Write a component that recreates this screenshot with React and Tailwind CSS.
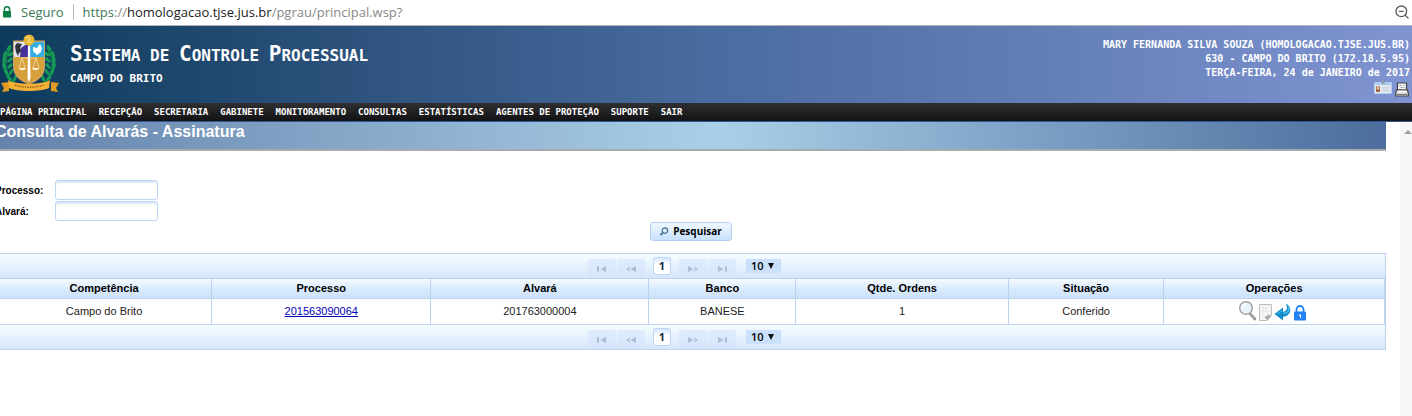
import { ZoomOut } from "lucide-react";

const menu = [
  "PÁGINA PRINCIPAL",
  "RECEPÇÃO",
  "SECRETARIA",
  "GABINETE",
  "MONITORAMENTO",
  "CONSULTAS",
  "ESTATÍSTICAS",
  "AGENTES DE PROTEÇÃO",
  "SUPORTE",
  "SAIR",
];

const columns = [
  { title: "Competência", width: "w-[15.5%]" },
  { title: "Processo", width: "w-[15.8%]" },
  { title: "Alvará", width: "w-[15.7%]" },
  { title: "Banco", width: "w-[10.6%]" },
  { title: "Qtde. Ordens", width: "w-[15.3%]" },
  { title: "Situação", width: "w-[11.2%]" },
  { title: "Operações", width: "w-[15.9%]" },
];

const rows = [
  {
    competencia: "Campo do Brito",
    processo: "201563090064",
    alvara: "201763000004",
    banco: "BANESE",
    ordens: 1,
    situacao: "Conferido",
  },
];

function AddressBar() {
  return (
    <div className="flex h-[26px] items-center border-b border-[#b5b5b5] bg-white px-[2px] pb-px font-['Open_Sans',sans-serif] text-[13px] leading-5">
      <svg viewBox="0 0 10 12" className="h-3 w-[10px] shrink-0">
        <path d="M2.4 6V3.4a2.6 2.6 0 0 1 5.2 0V6" fill="none" stroke="#0b8043" strokeWidth="1.5" />
        <rect x="1" y="5" width="8" height="6.6" rx="0.6" fill="#0b8043" />
      </svg>
      <span className="ml-[9px] text-[#3c7a55]">Seguro</span>
      <span className="mx-[9px] h-4 w-px bg-[#bbb]" />
      <span className="text-[#888]">
        <span className="text-[#3c7a55]">https</span>://
        <span className="text-[#222]">homologacao.tjse.jus.br</span>/pgrau/principal.wsp?
      </span>
      <button type="button" aria-label="Reduzir zoom" className="ml-auto text-[#5a5a5a]">
        <ZoomOut size={16} strokeWidth={2} />
      </button>
    </div>
  );
}

function Crest() {
  return (
    <svg viewBox="0 0 60 60" className="h-[60px] w-[60px] shrink-0">
      <g fill="none" stroke="#16884f" strokeWidth="2">
        <path d="M11 14C3 24 3 38 14 49" />
        <path d="M47 14c8 10 8 24-3 35" />
      </g>
      <g fill="#159a57">
        {[
          [9, 14, 30], [5, 20, 20], [4, 26, 5], [4, 32, -10], [6, 38, -25], [9, 44, -40],
          [11, 20, 60], [10, 26, 50], [10, 32, 40], [11, 38, 30], [15, 44, 20],
        ].map(([x, y, r]) => (
          <g key={`${x}-${y}`}>
            <ellipse cx={x} cy={y} rx="1.6" ry="3.4" transform={`rotate(${r} ${x} ${y})`} />
            <ellipse cx={58 - x} cy={y} rx="1.6" ry="3.4" transform={`rotate(${-r} ${58 - x} ${y})`} />
          </g>
        ))}
      </g>
      <path d="M13.500 7h31v25c0 9-5 14-15.500 18-10.500-4-15.500-9-15.500-18z" fill="#d6a03c" stroke="#c9a57a" strokeWidth="1" />
      <path d="M14 8h14v15H14z" fill="#dfe3ea" />
      <path d="M21 14l7-5v14h-8z" fill="#46309a" />
      <path d="M15 12l2-3 5 1-2 4 2 3-3 2-1 3-2-4z" fill="#30333d" />
      <path d="M30 8h14v15H30z" fill="#35aee0" />
      <path d="M33 13l4 1 3-4 2 4-1 4-4 3-4-4z" fill="#fff" />
      <path d="M28 12h2l.5 32-1.500 4-1.500-4z" fill="#fff" />
      <path d="M21 24h16M22 24l-3 10M22 24l3 10M36 24l-3 10M36 24l3 10" fill="none" stroke="#fff3d6" strokeWidth="0.6" />
      <path d="M19 34h7c-1 3-6 3-7 0zM32 34h7c-1 3-6 3-7 0z" fill="#fff3d6" />
      <circle cx="29" cy="6" r="5.500" fill="#e9b535" />
      <path d="M26 4c2-2 5 0 3 2s-2 3 3 2" fill="none" stroke="#f9dc82" strokeWidth="1.200" />
      <path d="M1 49l8-1v9l-7 1 2-4zM59 49l-8-1v9l7 1-2-4z" fill="#e39a22" />
      <path d="M8 46c7 5 35 5 42 0l-1 8c-8 4-32 4-40 0z" fill="#f5b134" />
      <path d="M15 51c8 3 20 3 29 0" fill="none" stroke="#94691f" strokeWidth="1.500" strokeDasharray="1.500 1" />
    </svg>
  );
}

function BadgeIcon() {
  return (
    <svg viewBox="0 0 18 14" className="h-[14px] w-[18px]">
      <rect x="0.500" y="2.500" width="17" height="11" rx="0.500" fill="#dfe6ee" stroke="#b5cdee" />
      <rect x="1" y="3" width="16" height="2" fill="#a9c9f2" />
      <rect x="7.500" y="0" width="3" height="4" rx="1" fill="#8d9bab" />
      <rect x="2" y="6.500" width="4" height="5.500" fill="#a5694a" />
      <circle cx="4" cy="8.300" r="1.200" fill="#f1c69e" />
      <path d="M8 8h8M8 10.500h7" stroke="#c8ced6" />
    </svg>
  );
}

function PrinterIcon() {
  return (
    <svg viewBox="0 0 14 15" className="h-[15px] w-[14px]">
      <path d="M2.500 1h9v7h-9z" fill="#f5f5f5" stroke="#444" strokeWidth="1.200" />
      <path d="M4.500 3.500h2M8 3.500h1.500M5.500 5.500h2M8.500 5.500h1" stroke="#999" />
      <path d="M1.500 8h11l.8 3v3H.7v-3z" fill="#d9dadc" stroke="#444" strokeWidth="1.200" />
      <path d="M2.500 9.500h9" stroke="#fff" strokeWidth="1.500" />
      <path d="M2 12.500h10" stroke="#777" />
    </svg>
  );
}

function Header() {
  return (
    <header className="flex h-[77px] justify-between bg-linear-to-r from-[#0d3b5c] via-[#496b9f] to-[#8094d2] font-['DejaVu_Sans_Mono',monospace] font-bold text-white">
      <div className="flex">
        <div className="pt-2">
          <Crest />
        </div>
        <div className="ml-[10px] pt-4">
          <h1 className="text-[16px] leading-6 whitespace-nowrap uppercase">
            <span className="text-[21px]">S</span>istema de <span className="text-[21px]">C</span>ontrole{" "}
            <span className="text-[21px]">P</span>rocessual
          </h1>
          <p className="mt-[3px] text-[11px] leading-4">CAMPO DO BRITO</p>
        </div>
      </div>
      <div className="pt-3 pr-[2px] text-right text-[10px] leading-[14px]">
        <p>MARY FERNANDA SILVA SOUZA (HOMOLOGACAO.TJSE.JUS.BR)</p>
        <p>630 - CAMPO DO BRITO (172.18.5.95)</p>
        <p>TERÇA-FEIRA, 24 de JANEIRO de 2017</p>
        <div className="flex items-start justify-end gap-[3px] pr-px">
          <button type="button" aria-label="Identificação">
            <BadgeIcon />
          </button>
          <button type="button" aria-label="Imprimir" className="pt-[2px]">
            <PrinterIcon />
          </button>
        </div>
      </div>
    </header>
  );
}

function PagerButton({ label, children }) {
  return (
    <button
      type="button"
      disabled
      aria-label={label}
      className="flex h-[19px] w-7 items-center justify-center rounded-t-[3px] bg-[#d3e5fb]/60 text-[#a9bdd4]"
    >
      <svg viewBox="0 0 10 6" className="h-[6px] w-[10px]" fill="currentColor">
        {children}
      </svg>
    </button>
  );
}

function Pager({ id }) {
  return (
    <div className="flex h-6 items-center justify-center bg-linear-to-b from-[#f6fcff] to-[#d6e6fb] pr-3">
      <div className="flex gap-px pt-[5px]">
        <PagerButton label="Primeira página">
          <path d="M0 0.500h2v5H0zM9 0v6L3.500 3z" />
        </PagerButton>
        <PagerButton label="Página anterior">
          <path d="M4 0.500L0 3l4 2.500V4.300L2.200 3 4 1.700zM10 0v6L4.500 3z" />
        </PagerButton>
      </div>
      <button
        type="button"
        className="mx-2 h-[18px] w-[18px] rounded-[3px] border border-[#bcd4f3] bg-linear-to-b from-[#d5e6fb] to-white to-40% font-['Open_Sans',sans-serif] text-[11px] leading-4 font-bold text-[#1b2a3a]"
      >
        1
      </button>
      <div className="flex gap-px pt-[5px]">
        <PagerButton label="Próxima página">
          <path d="M0 0v6l5.500-3zM6 0.500L10 3 6 5.500V4.300L7.800 3 6 1.700z" />
        </PagerButton>
        <PagerButton label="Última página">
          <path d="M1 0v6l5.500-3zM8 0.500h2v5H8z" />
        </PagerButton>
      </div>
      <div className="relative ml-[10px] flex">
        <select
          id={id}
          aria-label="Registros por página"
          defaultValue="10"
          className="h-[14px] w-[35px] appearance-none bg-[#cbe1fb] pl-[5px] font-['Open_Sans',sans-serif] text-[11px] leading-[14px] font-semibold text-black"
        >
          <option>10</option>
          <option>20</option>
          <option>50</option>
        </select>
        <svg viewBox="0 0 6 6" className="pointer-events-none absolute top-1 right-[7px] h-[6px] w-[6px]">
          <path d="M0 0h6L3 6z" fill="#111" />
        </svg>
      </div>
    </div>
  );
}

function Operations() {
  return (
    <div className="flex items-center justify-center gap-[2px] pr-1">
      <button type="button" aria-label="Visualizar">
        <svg viewBox="0 0 19 21" className="h-[21px] w-[19px]">
          <path d="M11.500 13l5.500 6" stroke="#8d8d8d" strokeWidth="2.600" strokeLinecap="round" />
          <path d="M12 13l5 5.500" stroke="#c9c9c9" strokeWidth="1" />
          <circle cx="8" cy="8" r="6.300" fill="#e9f4fa" stroke="#a3a3a3" strokeWidth="1.500" />
          <path d="M4 8a4 4 0 0 1 4-4" fill="none" stroke="#fff" strokeWidth="1.500" />
        </svg>
      </button>
      <button type="button" aria-label="Documento" className="pt-1">
        <svg viewBox="0 0 13 17" className="h-[17px] w-[13px]">
          <path d="M.5.5h12v11l-4.500 5H.5z" fill="#f5f5f5" stroke="#bdbdbd" />
          <path d="M3 4h7M3 7h7M3 10h3" stroke="#dadada" strokeDasharray="2 1" />
          <path d="M12.500 11.500L8 16.500c-.3-2-1.500-3-3-3.500 3-.5 4-1.500 4-3 1 1.500 2 1.800 3.500 1.500z" fill="#a5a5a5" />
        </svg>
      </button>
      <button type="button" aria-label="Devolver" className="pt-[2px]">
        <svg viewBox="0 0 17 18" className="h-[18px] w-[17px]">
          <path d="M11.500 0.500c7 3 6.500 12-2.500 13.500v3.500L0.500 11 9 4.500V9c4.500-1 5-4.500 2.500-8.500z" fill="#138ccc" />
          <path d="M14.500 4c1.500 3-.5 6-5 6.500" fill="none" stroke="#5ccdf2" strokeWidth="1.200" />
          <path d="M8 7.500L3.500 11" stroke="#3bb5e6" strokeWidth="1.200" />
        </svg>
      </button>
      <button type="button" aria-label="Assinar" className="pt-1">
        <svg viewBox="0 0 14 16" className="h-4 w-[14px]">
          <path d="M3.500 7.500V4.500a3.500 3.500 0 0 1 7 0v3" fill="none" stroke="#2480f5" strokeWidth="1.800" />
          <rect x="1" y="6.500" width="12" height="9" rx="1" fill="#2480f5" />
          <path d="M6 9.500h2v3.500H7V11H6z" fill="#fff" />
        </svg>
      </button>
    </div>
  );
}

function Field({ id, label }) {
  return (
    <div className="flex items-center">
      <label htmlFor={id} className="w-[60px] text-[10px] font-bold">
        {label}
      </label>
      <input
        id={id}
        type="text"
        className="h-5 w-[103px] rounded-[3px] border border-[#bcd5f5] bg-white px-1 text-[11px] shadow-[inset_0_2px_1px_#dbe9fb] outline-none"
      />
    </div>
  );
}

export default function App() {
  return (
    <div className="flex min-h-screen flex-col overflow-hidden bg-white font-['Liberation_Sans',sans-serif] text-black">
      <AddressBar />
      <Header />
      <nav className="flex h-[19px] items-center gap-3 border-b border-[#2f5797] bg-linear-to-b from-[#303033] to-[#121214] font-['DejaVu_Sans_Mono',monospace] text-[9px] leading-3 font-bold text-white">
        {menu.map((item) => (
          <a key={item} href="#" className="whitespace-nowrap">
            {item}
          </a>
        ))}
      </nav>

      <div className="flex flex-1">
        <main className="mr-[14px] -ml-[5px] min-w-0 flex-1">
          <h2 className="h-[29px] border-b-2 border-[#a8aaad] bg-linear-to-r from-[#6582aa] via-[#aad0e8] via-52% to-[#4c6d9d] text-[16px] leading-5 font-bold text-white">
            Consulta de Alvarás - Assinatura
          </h2>

          <form className="pt-[29px]" onSubmit={(e) => e.preventDefault()}>
            <div className="flex flex-col gap-px">
              <Field id="processo" label="Processo:" />
              <Field id="alvara" label="Alvará:" />
            </div>
            <div className="mt-px flex justify-center">
              <button
                type="submit"
                className="flex h-[19px] w-[82px] items-center justify-center gap-1 rounded-[3px] border border-[#b3d0f3] bg-linear-to-b from-[#f2f9ff] to-[#c7e0fb] pb-px font-['Open_Sans',sans-serif] text-[10px] leading-4 font-bold"
              >
                <svg viewBox="0 0 10 10" className="h-[9px] w-[10px]" fill="none" stroke="#41718f">
                  <circle cx="6" cy="4" r="3" strokeWidth="1.300" />
                  <path d="M3.800 6.200L1 9" strokeWidth="2" />
                </svg>
                Pesquisar
              </button>
            </div>
          </form>

          <div className="mt-3 border border-[#bcd3f0]">
            <Pager id="linhas-topo" />
            <table className="w-full table-fixed border-collapse text-center text-[11px] leading-4">
              <thead>
                <tr className="h-5 bg-linear-to-b from-[#f6fbff] via-[#d9eafd] via-50% to-[#cbe1fb]">
                  {columns.map((col) => (
                    <th key={col.title} className={`border border-[#bcd3f0] p-0 pb-px font-bold ${col.width}`}>
                      {col.title}
                    </th>
                  ))}
                </tr>
              </thead>
              <tbody>
                {rows.map((row) => (
                  <tr key={row.processo} className="h-[26px] text-[#222] *:border *:border-[#bcd3f0] *:p-0 *:pb-[2px]">
                    <td>{row.competencia}</td>
                    <td>
                      <a href="#" className="text-[#0000b8] underline">
                        {row.processo}
                      </a>
                    </td>
                    <td>{row.alvara}</td>
                    <td>{row.banco}</td>
                    <td>{row.ordens}</td>
                    <td>{row.situacao}</td>
                    <td>
                      <Operations />
                    </td>
                  </tr>
                ))}
              </tbody>
            </table>
            <Pager id="linhas-base" />
          </div>
        </main>

        <div className="flex w-3 justify-end bg-[#f7f7f7] pt-2">
          <svg viewBox="0 0 8 4" className="h-1 w-2">
            <path d="M0 4l4-4 4 4z" fill="#a0a0a0" />
          </svg>
        </div>
      </div>
    </div>
  );
}
